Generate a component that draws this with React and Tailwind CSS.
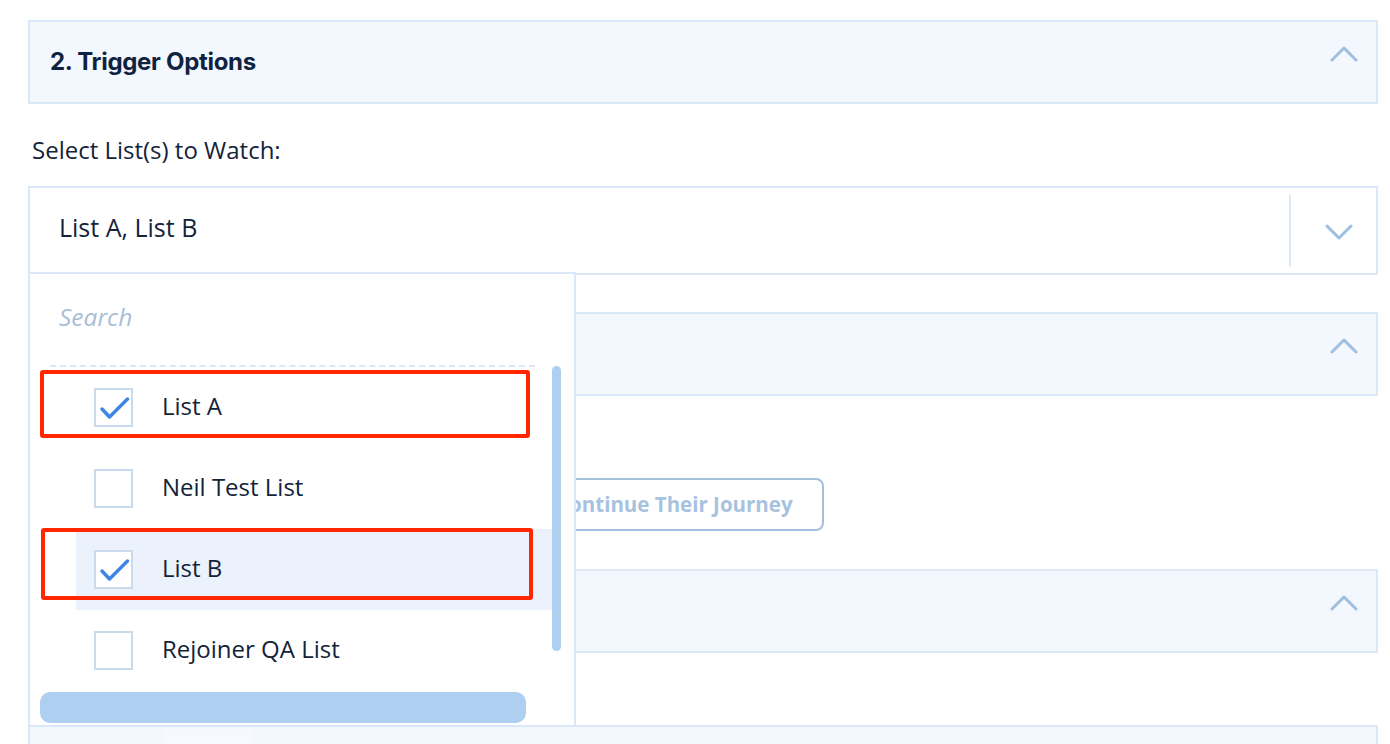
import React from "react";

const lists = [
  { name: "List A", checked: true },
  { name: "Neil Test List", checked: false },
  { name: "List B", checked: true, active: true },
  { name: "Rejoiner QA List", checked: false },
];

const ChevronUp = () => (
  <svg width="28" height="18" viewBox="0 0 28 18" fill="none">
    <polyline points="2,15 14,3 26,15" stroke="#9ebfdf" strokeWidth="3" strokeLinecap="round" strokeLinejoin="round" />
  </svg>
);

const ChevronDown = () => (
  <svg width="28" height="18" viewBox="0 0 28 18" fill="none">
    <polyline points="2,3 14,15 26,3" stroke="#9ebfdf" strokeWidth="3" strokeLinecap="round" strokeLinejoin="round" />
  </svg>
);

const Section = ({ title, className = "" }) => (
  <div className={`flex h-[84px] items-center justify-between border-2 border-[#dae8f8] bg-[#f3f7fe] pl-[20px] pr-[18px] ${className}`}>
    <h2 className="font-['Inter'] text-[24px] font-bold tracking-[-0.3px] text-[#0f2340]">{title}</h2>
    <div className="-mt-[16px]">
      <ChevronUp />
    </div>
  </div>
);

const Checkbox = ({ checked }) => (
  <div className="flex h-[39px] w-[39px] shrink-0 items-center justify-center border-2 border-[#cbdbee] bg-white">
    {checked && (
      <svg width="35" height="35" viewBox="0 0 35 35" fill="none">
        <polyline points="6,19 13.5,27 31.5,9" stroke="#3d86e3" strokeWidth="3.5" strokeLinecap="round" strokeLinejoin="round" />
      </svg>
    )}
  </div>
);

const Dropdown = () => (
  <div className="absolute left-0 top-[86px] z-10 h-[455px] w-[548px] border-2 border-[#dae8f8] bg-white">
    <div className="flex h-[91px] items-center pb-[4px] pl-[29px] text-[24.5px] italic text-[#a8bed6]">Search</div>
    <div className="ml-[20px] w-[485px] border-t-2 border-dashed border-[#dae8f8]" />
    <div className="flex h-[325px]">
      <div className="ml-[46px] w-[476px]">
        {lists.map((l) => (
          <div key={l.name} className={`flex h-[81px] items-center gap-[29px] pl-[18px] ${l.active ? "bg-[#ebf2fc]" : ""}`}>
            <Checkbox checked={l.checked} />
            <span className="pb-[4px] text-[24px] text-[#13233a]">{l.name}</span>
          </div>
        ))}
      </div>
      <div className="mt-[-1px] h-[285px] w-[9px] rounded-full bg-[#afcff1]" />
    </div>
    <div className="ml-[10px] h-[31px] w-[486px] rounded-[10px] bg-[#afcff1]" />

    {/* annotation boxes */}
    <div className="absolute left-[10px] top-[96px] h-[68px] w-[490px] rounded-[3px] border-[4px] border-[#ff2600]" />
    <div className="absolute left-[11px] top-[254px] h-[72px] w-[492px] rounded-[3px] border-[4px] border-[#ff2600]" />
  </div>
);

export default function App() {
  return (
    <div className="min-h-screen overflow-hidden bg-white font-['Open_Sans',sans-serif] text-[#13233a]">
      <div className="ml-[28px] w-[1350px] pt-[20px]">
        <Section title="2. Trigger Options" className="h-[83px]" />

        <p className="ml-[4px] mt-[31px] text-[24px] leading-[30px]">Select List(s) to Watch:</p>

        <div className="relative mt-[21px]">
          <div className="flex h-[89px] items-center border-2 border-[#dae8f8] bg-white">
            <span className="flex-1 pb-[6px] pl-[29px] text-[25px]">List A, List B</span>
            <div className="h-[72px] w-[2px] bg-[#dae8f8]" />
            <div className="flex w-[85px] items-center justify-center pl-[10px] pt-[2px]">
              <ChevronDown />
            </div>
          </div>
          <Dropdown />
        </div>

        <Section className="mt-[37px]" />

        <div className="h-[173px] pt-[82px]">
          <button className="ml-[497px] h-[53px] rounded-[8px] border-2 border-[#a3c0dd] px-[29px] text-[20.5px] font-bold text-[#a7c2df]">
            Continue Their Journey
          </button>
        </div>

        <Section className="h-[83px]" />

        <div className="h-[72px]" />

        <div className="flex h-[40px] border-2 border-b-0 border-[#dae8f8] bg-[#f3f7fe]">
          <div className="ml-[133px] mt-[2px] w-[90px] bg-[#f6f9fd]" />
        </div>
      </div>
    </div>
  );
}
